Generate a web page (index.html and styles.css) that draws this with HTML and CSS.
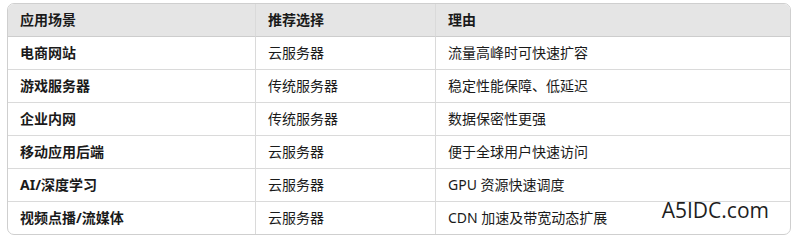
FILE: index.html
```html
<!DOCTYPE html>
<html lang="zh">
<head>
<meta charset="utf-8">
<link rel="stylesheet" href="styles.css">
</head>
<body>
<div class="wrap">
  <table class="grid">
    <colgroup><col class="c1"><col class="c2"><col class="c3"></colgroup>
    <thead>
      <tr><th>应用场景</th><th>推荐选择</th><th>理由</th></tr>
    </thead>
    <tbody>
      <tr><td class="k">电商网站</td><td>云服务器</td><td>流量高峰时可快速扩容</td></tr>
      <tr><td class="k">游戏服务器</td><td>传统服务器</td><td>稳定性能保障、低延迟</td></tr>
      <tr><td class="k">企业内网</td><td>传统服务器</td><td>数据保密性更强</td></tr>
      <tr><td class="k">移动应用后端</td><td>云服务器</td><td>便于全球用户快速访问</td></tr>
      <tr><td class="k">AI/深度学习</td><td>云服务器</td><td>GPU 资源快速调度</td></tr>
      <tr><td class="k">视频点播/流媒体</td><td>云服务器</td><td>CDN 加速及带宽动态扩展</td></tr>
    </tbody>
  </table>
  <div class="mark">A5IDC.com</div>
</div>
</body>
</html>
```
FILE: styles.css
```css
html, body {
  margin: 0;
  padding: 0;
  background: #ffffff;
}
body {
  padding: 3px 5px 0 7px;
  font-family: "Noto Sans", "Noto Sans CJK SC", sans-serif;
  font-size: 14px;
  color: #1a1a1a;
}
.wrap {
  position: relative;
  width: 784px;
}
.grid {
  width: 784px;
  border-collapse: separate;
  border-spacing: 0;
  border: 1px solid #cfcfcf;
  border-radius: 7px;
  overflow: hidden;
  table-layout: fixed;
}
.c1 { width: 247px; }
.c2 { width: 180px; }
.c3 { width: auto; }
.grid th, .grid td {
  height: 32px;
  padding: 0 12px;
  text-align: left;
  vertical-align: middle;
  border-bottom: 1px solid #dadada;
  border-left: 1px solid #dadada;
  line-height: 18px;
}
.grid th:first-child, .grid td:first-child { border-left: none; }
.grid tbody tr:last-child td { border-bottom: none; }
.grid th {
  background: #e5e5e5;
  font-weight: 700;
  border-bottom-color: #cdcdcd;
}
.grid td.k { font-weight: 700; }
.mark {
  position: absolute;
  right: 22px;
  top: 193px;
  font-family: "Open Sans", "Noto Sans", sans-serif;
  font-size: 21px;
  color: #1e1e1e;
}
```
